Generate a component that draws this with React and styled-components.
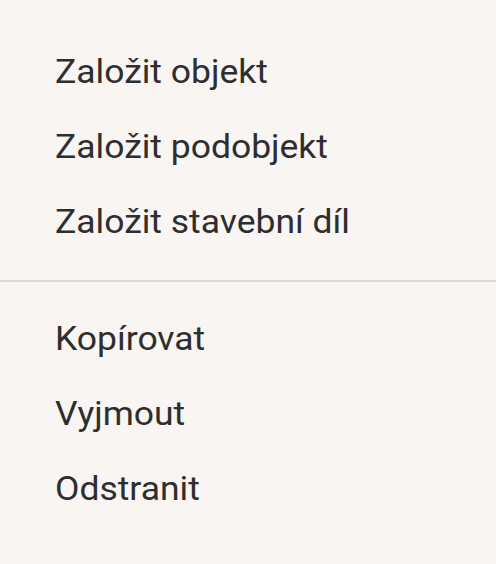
import React from "react"
import styled, { createGlobalStyle } from "styled-components"

const GlobalStyle = createGlobalStyle`
  html, body {
    margin: 0;
    padding: 0;
    background: #f9f5f3;
  }
  body {
    font-family: Roboto, "Liberation Sans", sans-serif;
  }
`

const groups = [
  ["Založit objekt", "Založit podobjekt", "Založit stavební díl"],
  ["Kopírovat", "Vyjmout", "Odstranit"],
]

const App = () => {
  return (
    <>
      <GlobalStyle />
      <Menu>
        {groups.map((items, gi) => (
          <React.Fragment key={gi}>
            {gi > 0 && <Divider />}
            {items.map(label => (
              <MenuItem key={label}>
                <Label>{label}</Label>
              </MenuItem>
            ))}
          </React.Fragment>
        ))}
      </Menu>
    </>
  )
}

export default App

const Menu = styled.div`
  display: flex;
  flex-direction: column;
  width: 496px;
  height: 564px;
  box-sizing: border-box;
  padding-top: 34px;
  background: #f9f5f3;
`

const MenuItem = styled.div`
  display: flex;
  align-items: center;
  height: 75px;
  padding-left: 55px;
  font-size: 33px;
  color: #2e2e2e;
`

const Label = styled.span`
  display: inline-block;
  transform: scaleX(1.075);
  transform-origin: left center;
  white-space: nowrap;
`

const Divider = styled.div`
  height: 2px;
  margin: 21px 0 19px;
  background: #dedad8;
`
